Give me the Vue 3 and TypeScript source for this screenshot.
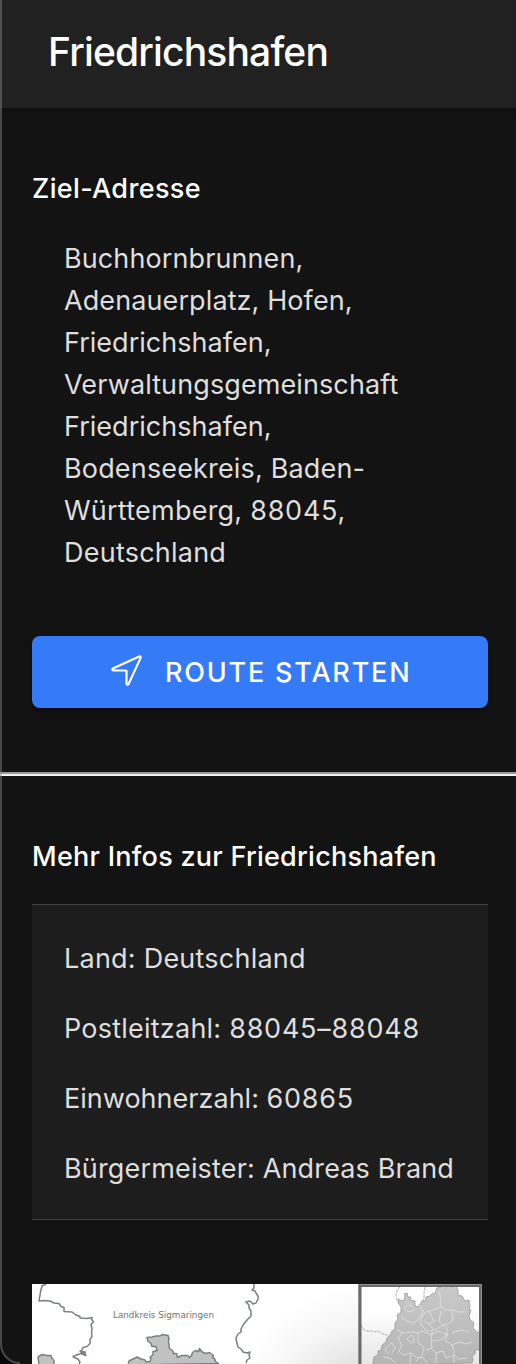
<script setup lang="ts">
interface Line {
  text: string
  fit: string
  digits?: string
}

const city = 'Friedrichshafen'

const address: Line[] = [
  { text: 'Buchhornbrunnen,', fit: 'snug' },
  { text: 'Adenauerplatz, Hofen,', fit: 'snug' },
  { text: 'Friedrichshafen,', fit: 'tight' },
  { text: 'Verwaltungsgemeinschaft', fit: 'snug' },
  { text: 'Friedrichshafen,', fit: 'tight' },
  { text: 'Bodenseekreis, Baden-', fit: 'normal' },
  { text: 'Württemberg, ', digits: '88045,', fit: 'wide' },
  { text: 'Deutschland', fit: 'wide' },
]

const facts: Line[] = [
  { text: 'Land: Deutschland', fit: 'wide' },
  { text: 'Postleitzahl: ', digits: '88045–88048', fit: 'wide' },
  { text: 'Einwohnerzahl: ', digits: '60865', fit: 'tight' },
  { text: 'Bürgermeister: Andreas Brand', fit: 'normal' },
]
</script>

<template>
  <div class="screen">
    <main class="page">
      <header class="toolbar">
        <h1>{{ city }}</h1>
      </header>

      <section class="destination">
        <h2 class="h-target">Ziel-Adresse</h2>
        <address>
          <span v-for="(line, i) in address" :key="i" class="line" :class="line.fit">{{ line.text }}<span v-if="line.digits" class="digits">{{ line.digits }}</span></span>
        </address>
        <button type="button" class="route">
          <svg class="nav-icon" viewBox="0 0 512 512" aria-hidden="true">
            <path d="M272 464a16 16 0 01-16-16.420V264.130a8 8 0 00-8-8H64.410a16.310 16.310 0 01-15.490-10.650 16 16 0 018.410-19.870l384-176.150a16 16 0 0121.220 21.190l-176 384A16 16 0 01272 464z" />
          </svg>
          <span>ROUTE STARTEN</span>
        </button>
      </section>

      <div class="divider"></div>

      <section class="info">
        <h2 class="h-info">Mehr Infos zur {{ city }}</h2>
        <ul>
          <li v-for="fact in facts" :key="fact.text" class="line" :class="fact.fit">{{ fact.text }}<span v-if="fact.digits" class="digits">{{ fact.digits }}</span></li>
        </ul>
        <svg class="map" viewBox="32 1284 450 80" aria-hidden="true">
          <defs>
            <radialGradient id="haze" gradientUnits="userSpaceOnUse" cx="365" cy="1415" r="130">
              <stop offset="0" stop-color="#c8c8c8" />
              <stop offset="0.4" stop-color="#e4e4e4" />
              <stop offset="0.7" stop-color="#f6f6f6" />
              <stop offset="1" stop-color="#fff" />
            </radialGradient>
            <linearGradient id="inset" x1="0" y1="0" x2="0" y2="1">
              <stop offset="0.3" stop-color="#fff" />
              <stop offset="1" stop-color="#e4e4e4" />
            </linearGradient>
            <linearGradient id="state" x1="0" y1="0" x2="0" y2="1">
              <stop offset="0" stop-color="#cbcbcb" />
              <stop offset="1" stop-color="#b5b5b5" />
            </linearGradient>
          </defs>
          <rect x="32" y="1284" width="450" height="80" fill="#fff" />
          <rect x="225" y="1284" width="135" height="80" fill="url(#haze)" />
          <g class="border">
            <path d="M46 1284l-4 2-1.5 6-1.5 9 5-.5 6 .5 4 2 5 .5 2 3 3 1 0 4 8 .5 4 3 4 1.5 0 1.5 7 .5 5-1-.5 2 2 2-2.5 3 1 4-.5 5 .5 3-2 3 0 4-3 3-4 1-2 4 3 1 2 3-5-2-3 1-5 2 1 1 4 1.500 2 3-2 4" />
            <path d="M80 1351l5 1v3l-3-2z" />
            <path class="land" d="M39 1365l-1-8 4-2.500 5 1 4 0 1 3 2 2 0 5z" />
            <path class="land" d="M128 1365l1-4 4-2 4-2 4 2 4 1 1 2 4-.5 1-3-1-1 3-3 0-3 4-1-1-4-4 0-1-3-3-2-1-4 5-.5 4-1 4 0 2-1.500 6 1 1 3-.5 3 1 7 3 2 1 3 3 0 1 4 4-2 6 0 2 2 2-2 1-3 3-2 3 1 1-3 2 3 4 2 4-1 4 3-1 2 2 1 1 3 3 2z" />
            <path d="M254 1284v4l-2 2 3 1 1 2 2 3 0 3-2 4-3 1-3-3-4 1 3 3 0 3 2 3 0 5-4 4-4 5-2 4 0 3-3 2-2 4 1 5 1 4 3 2 2 3 4 1 3-1-1 3 1 3-3 2-1 3" />
          </g>
          <text x="113" y="1318" textLength="101" lengthAdjust="spacingAndGlyphs">Landkreis Sigmaringen</text>
          <rect x="360" y="1285" width="121" height="84" fill="url(#inset)" />
          <path class="thin" d="M361 1325l2 4 4 2 5 0 2 1 4-1 5 3 4 1 3 3M400 1287l-3 3-1 6 1 4 2 4M425 1287l-1 6 0 5-2 6" />
          <path class="state" d="M373 1366v-4l1-5 4-2 0-4 3-1 1-5 4-3 1-4 3-3 2-4 3-2 0-6 3-4-1-4 4-3 0-5-2-3-1-5 4 2 2-1 1-4-1-2 3-1 1 4 3 0-1 3 5 1 0 4 2 2 3-3 2-3 3 0 1-4 4-1 2-2 3-1 2-5 4-1 0-2-3-3 3-1 3 2 2-3 2 3 3-1 1 5 4-1 2 4 0 5 4 1 3 5 4-1 1 6-1 3 2 1-2 6 1 4 4 3-1 5 4 4 4 1-1 4 1 5 1 4-1 4-6 0 0 4-3 2 1 4-1 3z" />
          <path class="district" d="M401 1317l6 4 7 2 6-5 3-7-4-6M404 1308q5 7 11 1M404 1308q4-5 9-1M439 1291l2 8-1 5 4 6 9 0 6 2 6 0M441 1307l-8 3-7 2-5 6 0 7 6 6 8-1 6-4 7-2 5-4-1-10M424 1321l6 4 3 4M429 1311l5 10-5 3M441 1311l-2 10 6 6M397 1330l7 3 7-1 7 1 5-2 8 4 7-4 9 4 0-8M418 1333l0 10 6 4-2 9-6 5M403 1332l-5 6 4 7-3 6M409 1337q4-4 5 2t-5 2q-4-2 0-4M432 1332l-1 9 1 7-6 2M431 1341l10-1 5-5M448 1333l-3 7 7 5 2 6M452 1333l9-3 8 2M452 1345l8-3 6 2 6-2M388 1346l4-3 3 5-3 5M387 1346l-2 4 4 4M399 1351l4 4 8-2 5 4 7 1 4 5M431 1348l5 5 7-2 3 7 8-3 5 4 7-1M383 1357l7 1 5 5M411 1353l-1 10M436 1353l0 10M454 1351l0 12" />
          <path d="M360 1365V1285.500H480.500V1365" fill="none" stroke="#6b6b6b" stroke-width="3" />
          <path d="M358.500 1364V1284.500H481.500V1364" fill="none" stroke="#929292" stroke-width="1" />
        </svg>
      </section>
    </main>
    <div class="frame-edge"></div>
  </div>
</template>

<style>
html,
body {
  background: #08070a;
}
body {
  margin: 0;
}
</style>

<style scoped>
.screen {
  position: relative;
  width: 516px;
  height: 1364px;
  overflow: hidden;
  font-family: Inter, "Liberation Sans", sans-serif;
  color: #dedede;
}
.page {
  height: 1364px;
  background: #131313;
  border-bottom-left-radius: 20px;
  overflow: hidden;
}
.frame-edge {
  position: absolute;
  inset: 0 -30px 0 0;
  border: 2px solid rgba(140, 140, 140, 0.45);
  border-top: 0;
  border-right: 0;
  border-bottom-left-radius: 20px;
  pointer-events: none;
  clip-path: inset(0 526px 0 0);
}
.toolbar {
  box-sizing: border-box;
  height: 108px;
  padding: 22px 48px 0;
  background: #212121;
  box-shadow: 0 1px 6px rgba(0, 0, 0, 0.35);
}
h1,
h2 {
  margin: 0;
  color: #fff;
  font-weight: 500;
  white-space: nowrap;
}
h1 {
  font-size: 39px;
  line-height: 60px;
  letter-spacing: -0.83px;
}
h2 {
  font-size: 27px;
  line-height: 36px;
}
.h-target {
  letter-spacing: 0.35px;
}
.h-info {
  letter-spacing: 0.26px;
}
.destination {
  box-sizing: border-box;
  height: 664px;
  padding: 63px 28px 0 32px;
}
address {
  display: flex;
  flex-direction: column;
  align-items: flex-start;
  margin: 31px 0 0 32px;
  font-style: normal;
}
.line {
  font-size: 27px;
  line-height: 42px;
  white-space: pre;
}
.tight {
  letter-spacing: 0.02px;
}
.snug {
  letter-spacing: 0.1px;
}
.normal {
  letter-spacing: 0.16px;
}
.wide {
  letter-spacing: 0.23px;
}
.digits {
  letter-spacing: 0.75px;
}
.route {
  display: flex;
  align-items: center;
  box-sizing: border-box;
  width: 456px;
  height: 72px;
  margin-top: 62px;
  padding: 0 0 0 77px;
  border: 0;
  border-radius: 8px;
  background: #357af6;
  box-shadow: 0 3px 5px rgba(0, 0, 0, 0.4);
  color: #fff;
  font: 450 27px/36px Inter, "Liberation Sans", sans-serif;
  letter-spacing: 1.8px;
  white-space: nowrap;
}
.route span {
  padding-top: 2px;
}
.nav-icon {
  width: 35px;
  height: 35px;
  margin: 0 21px 3px 0;
  fill: none;
  stroke: #fff;
  stroke-width: 32;
  stroke-linecap: round;
  stroke-linejoin: round;
}
.divider {
  height: 2px;
  border-top: 2px solid #989898;
  background: #f0f0f0;
}
.info {
  padding: 63px 28px 0 32px;
}
ul {
  box-sizing: border-box;
  height: 316px;
  margin: 29px 0 64px;
  padding: 33px 32px 0;
  border-top: 1px solid #414141;
  border-bottom: 1px solid #414141;
  background: #1d1d1d;
  list-style: none;
}
li {
  margin-bottom: 28px;
}
.map {
  display: block;
  width: 450px;
  height: 80px;
}
.map text {
  font-family: "DejaVu Sans", sans-serif;
  font-size: 9px;
  fill: #707070;
}
.border path {
  fill: none;
  stroke: #788080;
  stroke-width: 1.5;
  stroke-linejoin: round;
}
.border .land {
  fill: #c1c1c1;
}
.thin {
  fill: none;
  stroke: #999;
  stroke-width: 0.8;
  stroke-dasharray: 3 1;
}
.state {
  fill: url(#state);
  stroke: #999;
  stroke-width: 0.8;
}
.district {
  fill: none;
  stroke: #e2e2e2;
  stroke-width: 0.8;
}
</style>
